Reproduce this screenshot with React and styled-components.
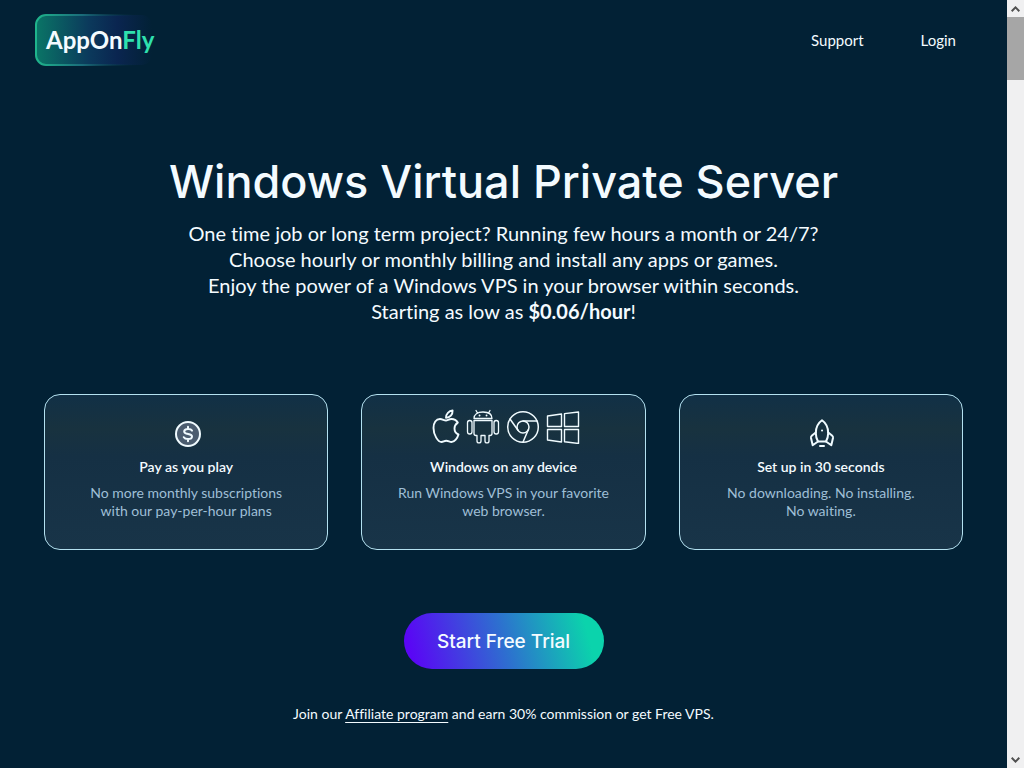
import React from 'react';
import styled, { createGlobalStyle, css } from 'styled-components';

const GlobalStyle = createGlobalStyle`
  * {
    box-sizing: border-box;
  }

  body {
    margin: 0;
    background: #022135;
    color: #f4fbff;
    font-family: Lato, "Liberation Sans", sans-serif;
    font-variant-ligatures: none;
  }
`;

const StyledWindow = styled.div`
  display: grid;
  grid-template-columns: 1fr 17px;
  min-height: 100vh;
`;

const StyledPage = styled.div`
  display: flex;
  flex-direction: column;
`;

const StyledHeader = styled.header`
  display: flex;
  align-items: center;
  justify-content: space-between;
  height: 80px;
  padding: 0 51px 0 34px;
`;

const StyledLogoLink = styled.a`
  display: flex;
  text-decoration: none;
`;

const StyledNav = styled.nav`
  display: flex;
  gap: 57px;
`;

const StyledNavLink = styled.a`
  color: #f4fbff;
  font-size: 15px;
  line-height: 20px;
  text-decoration: none;
`;

const StyledMain = styled.main`
  display: flex;
  flex-direction: column;
  align-items: center;
  padding: 74px 44px 24px;
  text-align: center;
`;

const StyledTitle = styled.h1`
  margin: 0 0 10px;
  font-family: Inter, "Liberation Sans", sans-serif;
  font-size: 45px;
  font-weight: 500;
  line-height: 56px;
`;

const StyledLead = styled.p`
  margin: 0 0 70px;
  font-size: 20px;
  line-height: 26px;
`;

const StyledCards = styled.section`
  display: grid;
  grid-template-columns: repeat(3, 1fr);
  gap: 33px;
  width: 100%;
  margin-bottom: 63px;
`;

const StyledCard = styled.article`
  display: flex;
  flex-direction: column;
  align-items: center;
  padding: 13px 24px 29px;
  border: 1px solid #b4e1f0;
  border-radius: 16px;
  background: linear-gradient(#113046 0%, #18323f 22%, #153044 40%, #183448 100%);
`;

const StyledIcons = styled.div`
  display: flex;
  align-items: ${props => (props.$many ? 'flex-start' : 'flex-end')};
  height: 40px;
  margin-bottom: 9px;
  padding-left: 3px;
  ${props => props.$many && css`
    gap: 6px;
    padding-left: 6px;
  `}
`;

const StyledCardTitle = styled.h2`
  margin: 0 0 7px;
  font-size: 14px;
  font-weight: 600;
  line-height: 20px;
`;

const StyledCardText = styled.p`
  margin: 0;
  color: #9fbfd6;
  font-size: 14px;
  line-height: 18px;
`;

const StyledButton = styled.button`
  width: 200px;
  height: 56px;
  margin-bottom: 35px;
  border: none;
  border-radius: 28px;
  background: linear-gradient(75deg, #5a06f5 5%, #2d70cf 50%, #0bd3ac 90%);
  color: #f4fbff;
  font-family: Inter, "Liberation Sans", sans-serif;
  font-size: 19px;
  font-weight: 500;
  cursor: pointer;
`;

const StyledAffiliate = styled.p`
  margin: 0;
  font-size: 14px;
  line-height: 20px;

  a {
    color: inherit;
    text-underline-offset: 3px;
  }
`;

const StyledScrollbar = styled.div`
  display: flex;
  flex-direction: column;
  justify-content: space-between;
  background: #f0f0f1;
`;

const StyledThumb = styled.div`
  height: 63px;
  background: #a6a6a6;
`;

const StyledArrow = styled.button`
  display: flex;
  align-items: center;
  justify-content: center;
  width: 17px;
  height: 17px;
  padding: 0;
  border: none;
  background: #f0f0f1;
  color: #505050;
`;

const StyledIcon = styled.svg`
  display: block;
  fill: none;
  stroke: #f0fbff;
  stroke-linecap: round;
  stroke-linejoin: round;
`;

const Logo = () => (
  <svg width="124" height="54" viewBox="0 0 124 54" role="img" aria-label="AppOnFly">
    <defs>
      <linearGradient id="logoFill">
        <stop offset="0" stopColor="#0a7566" />
        <stop offset="0.45" stopColor="#0b3a5c" />
        <stop offset="0.7" stopColor="#0a2550" />
        <stop offset="1" stopColor="#022135" />
      </linearGradient>
      <linearGradient id="logoEdge">
        <stop offset="0" stopColor="#1fb58c" />
        <stop offset="0.4" stopColor="#1a6b7a" />
        <stop offset="0.9" stopColor="#022135" stopOpacity="0" />
      </linearGradient>
    </defs>
    <rect x="2" y="2" width="116" height="50" rx="10" fill="url(#logoFill)" stroke="url(#logoEdge)" strokeWidth="2" />
    <text x="12" y="36" fontSize="24" fontWeight="700" fill="#f4fbff">
      AppOn<tspan fill="#2fe0ae">Fly</tspan>
    </text>
  </svg>
);

const DollarIcon = () => (
  <StyledIcon width="28" height="28" viewBox="0 0 28 28" strokeWidth="2">
    <circle cx="14" cy="14" r="12" fill="#4b5d70" />
    <path d="M18 10.600C17.400 9.500 16 9 14 9c-2.300 0-3.800.9-3.800 2.500 0 3.700 7.800 1.500 7.800 5 0 1.700-1.700 2.500-4 2.500-2.100 0-3.500-.6-4.200-1.800M14 6.800V9M14 19v2.200" />
  </StyledIcon>
);

const AppleIcon = () => (
  <StyledIcon width="28" height="36" viewBox="0 0 28 36" strokeWidth="1.9">
    <path d="M14 12.500C12 12.500 10.500 11 8 11C4 11 1.500 14.500 1.500 20C1.500 27 6 34 9.500 34C11.500 34 12 32.800 14.200 32.800C16.500 32.800 17.500 34 19.500 34C22.500 34 25.500 30 26.500 26.500C24 25.500 22.500 23.500 22.500 20.500C22.500 18 24 15.800 25.800 14.600C24.500 12.500 22 11 19.500 11C17 11 15.500 12.500 14 12.500Z" />
    <path d="M14 9.800C13.800 6 17 2.800 20.600 2.500C20.800 6.500 18 9.600 14 9.800Z" />
  </StyledIcon>
);

const AndroidIcon = () => (
  <StyledIcon width="34" height="36" viewBox="0 0 34 36" strokeWidth="1.3">
    <path d="M8 10.500C8 6.500 11.500 4 17 4s9 2.500 9 6.500ZM11.500 5 10 2.500M22.500 5 24 2.500" />
    <path d="M8 12.500v13c0 1.400.6 2 2 2h1v5.500c0 2.600 4 2.600 4 0v-5.500h4v5.500c0 2.600 4 2.600 4 0v-5.500h1c1.400 0 2-.6 2-2V12.500Z" />
    <rect x="1.500" y="12.500" width="4.500" height="13.500" rx="2.200" />
    <rect x="28" y="12.500" width="4.500" height="13.500" rx="2.200" />
    <path d="M13.500 7.500h.1M20.500 7.500h.1" strokeWidth="1.800" />
  </StyledIcon>
);

const ChromeIcon = () => (
  <StyledIcon width="34" height="36" viewBox="0 0 34 36" strokeWidth="1.5">
    <circle cx="17" cy="19" r="15.300" />
    <circle cx="17" cy="19" r="6" />
    <path d="M17 13h14M4 11l7.800 11M22.200 22 17 34" />
  </StyledIcon>
);

const WindowsIcon = () => (
  <StyledIcon width="34" height="36" viewBox="0 0 34 36" strokeWidth="1.4">
    <path d="M1.500 8 15.500 6v12.500h-14ZM18.500 5.600 32.500 4v14.500h-14ZM1.500 21.500h14V34l-14-2ZM18.500 21.500h14V35.500l-14-1.700Z" />
  </StyledIcon>
);

const RocketIcon = () => (
  <StyledIcon width="26" height="30" viewBox="0 0 26 30" strokeWidth="2">
    <path d="M13 2.200C9 5 6.800 10 6.800 15c0 3 .8 6 2.200 8.500h8c1.400-2.500 2.200-5.500 2.200-8.500 0-5-2.200-10-6.200-12.800Z" />
    <path d="M6.800 14.500 3 17.500q-1.200 1-1 2.500l1.700 7.200L9 23.500M19.200 14.500l3.800 3q1.200 1 1 2.500l-1.700 7.200L17 23.500" />
    <path d="M13 12.500h.1M11 28h4" />
  </StyledIcon>
);

const cards = [
  {
    title: 'Pay as you play',
    lines: ['No more monthly subscriptions', 'with our pay-per-hour plans'],
    icons: [DollarIcon],
  },
  {
    title: 'Windows on any device',
    lines: ['Run Windows VPS in your favorite', 'web browser.'],
    icons: [AppleIcon, AndroidIcon, ChromeIcon, WindowsIcon],
  },
  {
    title: 'Set up in 30 seconds',
    lines: ['No downloading. No installing.', 'No waiting.'],
    icons: [RocketIcon],
  },
];

const Scrollbar = () => (
  <StyledScrollbar>
    <div>
      <StyledArrow type="button" aria-label="Scroll up">
        <svg width="9" height="6" viewBox="0 0 9 6" fill="none" stroke="currentColor" strokeWidth="2">
          <path d="M.7 5.200 4.500 1.400l3.800 3.800" />
        </svg>
      </StyledArrow>
      <StyledThumb />
    </div>
    <StyledArrow type="button" aria-label="Scroll down">
      <svg width="9" height="6" viewBox="0 0 9 6" fill="none" stroke="currentColor" strokeWidth="2">
        <path d="M.7.800 4.500 4.600 8.300.800" />
      </svg>
    </StyledArrow>
  </StyledScrollbar>
);

const App = () => {
  return (
    <>
      <GlobalStyle />
      <StyledWindow>
        <StyledPage>
          <StyledHeader>
            <StyledLogoLink href="#home">
              <Logo />
            </StyledLogoLink>
            <StyledNav>
              <StyledNavLink href="#support">Support</StyledNavLink>
              <StyledNavLink href="#login">Login</StyledNavLink>
            </StyledNav>
          </StyledHeader>
          <StyledMain>
            <StyledTitle>Windows Virtual Private Server</StyledTitle>
            <StyledLead>
              One time job or long term project? Running few hours a month or 24/7?
              <br />
              Choose hourly or monthly billing and install any apps or games.
              <br />
              Enjoy the power of a Windows VPS in your browser within seconds.
              <br />
              Starting as low as <strong>$0.06/hour</strong>!
            </StyledLead>
            <StyledCards>
              {cards.map(card => (
                <StyledCard key={card.title}>
                  <StyledIcons $many={card.icons.length > 1}>
                    {card.icons.map((Icon, i) => <Icon key={i} />)}
                  </StyledIcons>
                  <StyledCardTitle>{card.title}</StyledCardTitle>
                  <StyledCardText>
                    {card.lines[0]}
                    <br />
                    {card.lines[1]}
                  </StyledCardText>
                </StyledCard>
              ))}
            </StyledCards>
            <StyledButton type="button">Start Free Trial</StyledButton>
            <StyledAffiliate>
              Join our <a href="#affiliate">Affiliate program</a> and earn 30% commission or get Free VPS.
            </StyledAffiliate>
          </StyledMain>
        </StyledPage>
        <Scrollbar />
      </StyledWindow>
    </>
  );
};

export default App;
